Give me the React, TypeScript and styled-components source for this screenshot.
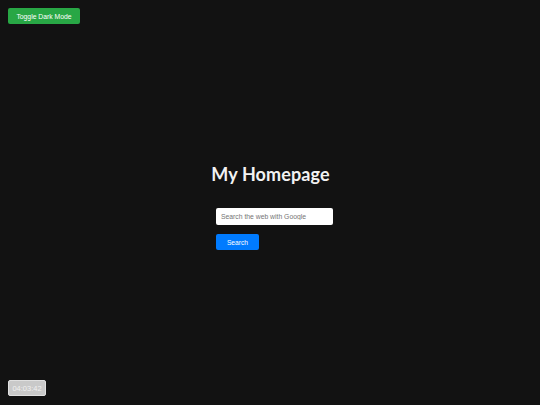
import styled, { createGlobalStyle } from 'styled-components';

const GlobalStyle = createGlobalStyle`
    html, body {
        margin: 0;
        padding: 0;
        background-color: #121212;
    }
    body {
        font-family: 'Liberation Sans', Arial, sans-serif;
    }
`;

const Page = styled.div`
    position: relative;
    display: flex;
    flex-direction: column;
    width: 540px;
    height: 405px;
    box-sizing: border-box;
    padding: 8px;
    background-color: #121212;
    color: #ffffff;
    overflow: hidden;
`;

const TopBar = styled.div`
    display: flex;
`;

const ToggleButton = styled.button`
    height: 16px;
    width: 72px;
    padding: 0;
    border: none;
    border-radius: 2px;
    background-color: #28a745;
    color: #ffffff;
    font-family: 'Liberation Sans', Arial, sans-serif;
    font-size: 6.8px;
    cursor: pointer;
`;

const Main = styled.main`
    flex: 1;
    display: flex;
    flex-direction: column;
    align-items: center;
    padding-top: 139px;
`;

const Title = styled.h1`
    margin: 0 0 0 1px;
    font-family: Lato, 'Noto Sans', sans-serif;
    font-weight: 700;
    font-size: 18px;
    letter-spacing: 0.1px;
    line-height: 22px;
    color: #f2f2f2;
`;

const SearchForm = styled.form`
    display: flex;
    flex-direction: column;
    align-items: flex-start;
    gap: 9px;
    margin: 23px 0 0 9px;
    width: 117px;
`;

const SearchInput = styled.input`
    box-sizing: border-box;
    width: 117px;
    height: 17px;
    padding: 0 5px;
    border: none;
    border-radius: 2px;
    background-color: #ffffff;
    font-family: 'Liberation Sans', Arial, sans-serif;
    font-size: 6.8px;
    outline: none;

    &::placeholder {
        color: #757575;
    }
`;

const SearchButton = styled.button`
    width: 43px;
    height: 16px;
    padding: 0;
    border: none;
    border-radius: 2px;
    background-color: #007bff;
    color: #ffffff;
    font-family: 'Liberation Sans', Arial, sans-serif;
    font-size: 6.7px;
    cursor: pointer;
`;

const Clock = styled.div`
    position: absolute;
    left: 8px;
    bottom: 9px;
    display: flex;
    align-items: center;
    justify-content: center;
    box-sizing: border-box;
    width: 38px;
    height: 16px;
    border: 1px solid #e0e0e0;
    border-radius: 2px;
    background-color: #c9c9c9;
    color: #f0f0f0;
    font-family: 'Liberation Sans', Arial, sans-serif;
    font-size: 7.5px;
`;

const App = () => {
    return (
        <Page>
            <GlobalStyle />
            <TopBar>
                <ToggleButton>Toggle Dark Mode</ToggleButton>
            </TopBar>
            <Main>
                <Title>My Homepage</Title>
                <SearchForm onSubmit={e => e.preventDefault()}>
                    <SearchInput type="text" placeholder="Search the web with Google" />
                    <SearchButton type="submit">Search</SearchButton>
                </SearchForm>
            </Main>
            <Clock>04:03:42</Clock>
        </Page>
    );
};

export default App;
